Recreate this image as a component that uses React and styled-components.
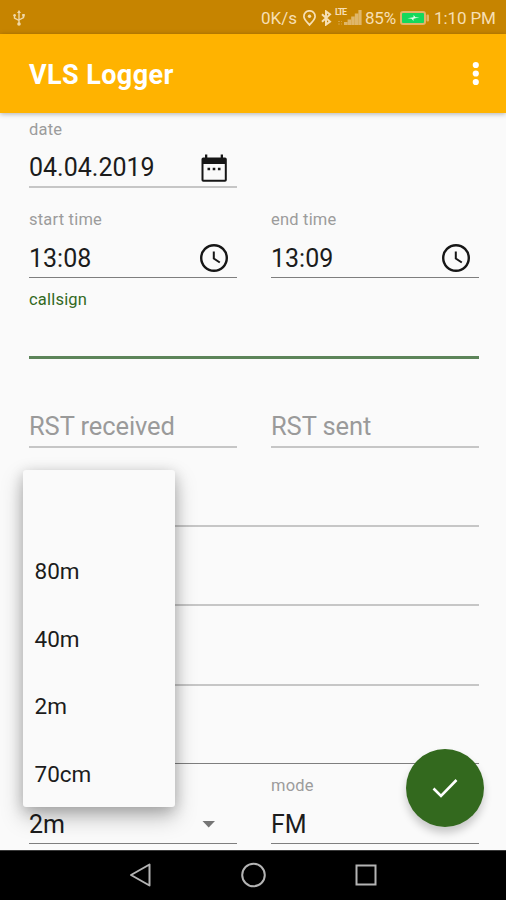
import React from 'react'

import styled, { createGlobalStyle } from 'styled-components';


const GlobalStyle = createGlobalStyle`
  * {
    box-sizing: border-box;
  }
  body {
    margin: 0;
    background-color: #fafafa;
    font-family: Roboto, 'Liberation Sans', sans-serif;
  }
`;

const Screen = styled.div`
  position: relative;
  display: flex;
  flex-direction: column;
  width: 506px;
  height: 900px;
  overflow: hidden;
  background-color: #fafafa;
`;

const StatusBar = styled.div`
  display: flex;
  justify-content: space-between;
  align-items: center;
  height: 34px;
  flex: none;
  padding: 1px 11px 0 12px;
  background-color: #c68400;
  color: #f6dfb4;
`;

const StatusIcons = styled.div`
  display: flex;
  align-items: center;
  height: 32px;
  white-space: nowrap;

  svg {
    display: block;
    flex: none;
  }
`;

const StatusText = styled.span`
  width: ${({ $width }) => $width}px;
  font-size: 17px;
  letter-spacing: ${({ $spacing }) => $spacing || 0}px;
`;

const IconGroup = styled.div`
  display: flex;
  align-items: center;
  gap: 5px;
  margin: 0 3px 0 6px;
`;

const Network = styled.div`
  display: flex;
  align-items: center;
  position: relative;
  margin-right: 3px;
`;

const Lte = styled.span`
  position: absolute;
  left: 0;
  top: -1px;
  font-size: 9px;
  line-height: 8px;
  font-weight: 700;
  letter-spacing: -1.2px;
`;

const BatteryBox = styled.div`
  margin: 0 4px 0 3px;
`;

const AppBar = styled.header`
  display: flex;
  justify-content: space-between;
  align-items: center;
  height: 79px;
  flex: none;
  padding: 1px 24px 0 29px;
  background-color: #ffb300;
  color: white;
  box-shadow: 0 1px 5px rgba(0, 0, 0, 0.3);
  z-index: 1;
`;

const Title = styled.h1`
  margin: 0;
  font-size: 27px;
  font-weight: 700;
  letter-spacing: 0.4px;
  padding-top: 1px;
`;

const Form = styled.main`
  flex: 1;
  min-height: 0;
  padding: 0 27px 0 29px;
  overflow: hidden;
`;

const Row = styled.div`
  display: grid;
  grid-template-columns: ${({ $single }) => ($single ? '1fr' : '208px 208px')};
  column-gap: 34px;
  height: ${({ $height }) => $height}px;
`;

const lines = {
    light: '2px solid #c6c6c6',
    dark: '1px solid #7e7e7e',
    focus: '3px solid #5c8459',
}

const Field = styled.div`
  display: flex;
  flex-direction: column;
  justify-content: flex-end;
  height: 100%;
  border-bottom: ${({ $line }) => lines[$line]};
`;

const Label = styled.label`
  margin-bottom: 9px;
  color: ${({ $focus }) => ($focus ? '#33691e' : '#9c9c9c')};
  font-size: 16.5px;
  line-height: 20px;
  letter-spacing: 0.2px;
`;

const Value = styled.div`
  display: flex;
  justify-content: space-between;
  align-items: center;
  height: ${({ $height }) => $height || 38}px;
  padding-right: ${({ $end }) => $end || 8}px;
  color: ${({ $hint }) => ($hint ? '#9a9a9a' : '#1c1c1c')};
  font-size: ${({ $hint }) => ($hint ? 25.5 : 25)}px;
  letter-spacing: ${({ $hint }) => ($hint ? -0.1 : 0)}px;

  svg {
    display: block;
  }
`;

const Menu = styled.ul`
  position: absolute;
  left: 23px;
  top: 470px;
  width: 152px;
  height: 337px;
  margin: 0;
  padding: 0;
  list-style: none;
  background-color: #fafafa;
  border-radius: 3px;
  box-shadow: 0 10px 22px rgba(0, 0, 0, 0.26), 0 3px 14px rgba(0, 0, 0, 0.18);
  z-index: 2;
`;

const MenuItem = styled.li`
  display: flex;
  align-items: center;
  height: 67.5px;
  padding-left: 11.5px;
  color: #1c1c1c;
  font-size: 22.5px;
`;

const Fab = styled.button`
  position: absolute;
  left: 406px;
  top: 749px;
  display: flex;
  justify-content: center;
  align-items: center;
  width: 78px;
  height: 78px;
  padding: 0;
  border: none;
  border-radius: 50%;
  background-color: #33691e;
  box-shadow: 0 6px 9px rgba(0, 0, 0, 0.2);
  z-index: 2;
`;

const NavBar = styled.nav`
  display: flex;
  justify-content: center;
  align-items: center;
  gap: 88px;
  height: 50px;
  flex: none;
  padding-bottom: 1px;
  background-color: black;
  border-top: 1px solid #3a3a3a;
`;

const UsbIcon = () => (
    <svg width="14" height="18" viewBox="0 0 14 18" fill="none" stroke="#f0d8a8" strokeWidth="1.4">
        <path d="M7 3v11M2.500 6v3L7 11.500M11.500 6v2.500L7 11" />
        <path d="M7 1l2 3H5z" fill="#f0d8a8" stroke="none" />
        <circle cx="2.600" cy="6.200" r="1.300" fill="#f0d8a8" stroke="none" />
        <path d="M10.200 5h2.600v2.600h-2.600z" fill="#f0d8a8" stroke="none" />
        <circle cx="7" cy="15" r="1.800" fill="#f0d8a8" stroke="none" />
    </svg>
)

const PinIcon = () => (
    <svg width="13" height="16" viewBox="0 0 13 16" fill="none" stroke="#f6dfb4" strokeWidth="1.700">
        <path d="M6.500 15C4 12 .9 9.300.9 6.400a5.600 5.600 0 0 1 11.200 0C12.100 9.300 9 12 6.500 15z" />
        <circle cx="6.500" cy="6.300" r="1.700" fill="#f6dfb4" stroke="none" />
    </svg>
)

const BluetoothIcon = () => (
    <svg width="11" height="16" viewBox="0 0 11 16" fill="none" stroke="#f6dfb4" strokeWidth="2">
        <path d="M1 4.300l8 7.300-4 3V1.400l4 3-8 7.300" />
    </svg>
)

const SignalIcon = () => (
    <svg width="27" height="17" viewBox="0 0 27 17" fill="#dfb66a">
        <path d="M9 13h3.400v3H9zM12.600 10.500H16V16h-3.400zM16.200 7.500h3.400V16h-3.400zM19.800 4.500h3.400V16h-3.400zM23.400 1h3.200v15h-3.200z" />
        <path d="M3 12h2v1H3zM6 12h1v1H6zM3 14.500h2v1H3zM6 14.500h1v1H6z" opacity="0.6" />
    </svg>
)

const BatteryIcon = () => (
    <svg width="30" height="14" viewBox="0 0 30 14">
        <rect x="1" y="1" width="24" height="12" rx="2" fill="#14d95c" stroke="#e3b469" strokeWidth="2" />
        <rect x="26.500" y="3.500" width="2.500" height="7" rx="1" fill="#e3b469" />
        <path d="M7.500 7.300l6-1V4l2 2.300h4l-6 1.500V10l-2-2.200z" fill="#e6ffe9" />
    </svg>
)

const MoreIcon = () => (
    <svg width="12" height="26" viewBox="0 0 12 26" fill="white">
        <circle cx="5.800" cy="4" r="3.100" />
        <circle cx="5.800" cy="12.500" r="3.100" />
        <circle cx="5.800" cy="21" r="3.100" />
    </svg>
)

const CalendarIcon = () => (
    <svg width="30" height="30" viewBox="0 0 30 30" fill="#161616">
        <path d="M6 1.500h2.300v3h13.400v-3H24v3h2q1.800 0 1.800 1.800V27q0 1.800-1.800 1.800H4.300Q2.500 28.800 2.500 27V6.300q0-1.800 1.800-1.800H6zM4.500 11v15.800h21.300V11z" />
        <path d="M8.500 14.800h2.600v2.400H8.500zM13.700 14.800h2.600v2.400h-2.600zM18.900 14.800h2.600v2.400h-2.600z" />
    </svg>
)

const ClockIcon = () => (
    <svg width="30" height="30" viewBox="0 0 30 30" fill="none" stroke="#161616">
        <circle cx="15" cy="15" r="12.800" strokeWidth="2.400" />
        <path d="M14.800 8.500v7l6 4" strokeWidth="2" />
    </svg>
)

const bands = ['', '80m', '40m', '2m', '70cm']

const App = () => {
    return (
        <>
        <GlobalStyle />
        <Screen>
            <StatusBar>
                <UsbIcon />
                <StatusIcons>
                    <StatusText $width={36}>0K/s</StatusText>
                    <IconGroup>
                        <PinIcon />
                        <BluetoothIcon />
                    </IconGroup>
                    <Network>
                        <Lte>LTE</Lte>
                        <SignalIcon />
                    </Network>
                    <StatusText $width={32} $spacing={-0.2}>85%</StatusText>
                    <BatteryBox>
                        <BatteryIcon />
                    </BatteryBox>
                    <StatusText $width={61} $spacing={-0.1}>1:10 PM</StatusText>
                </StatusIcons>
            </StatusBar>

            <AppBar>
                <Title>VLS Logger</Title>
                <MoreIcon />
            </AppBar>

            <Form>
                <Row $height={75}>
                    <Field $line="light">
                        <Label>date</Label>
                        <Value $height={37}>04.04.2019 <CalendarIcon /></Value>
                    </Field>
                </Row>
                <Row $height={90}>
                    <Field $line="dark">
                        <Label>start time</Label>
                        <Value>13:08 <ClockIcon /></Value>
                    </Field>
                    <Field $line="dark">
                        <Label>end time</Label>
                        <Value>13:09 <ClockIcon /></Value>
                    </Field>
                </Row>
                <Row $single $height={81}>
                    <Field $line="focus">
                        <Label $focus>callsign</Label>
                        <Value $height={37} />
                    </Field>
                </Row>
                <Row $height={89}>
                    <Field $line="light">
                        <Value $hint $height={40}>RST received</Value>
                    </Field>
                    <Field $line="light">
                        <Value $hint $height={40}>RST sent</Value>
                    </Field>
                </Row>
                <Row $single $height={79}>
                    <Field $line="light" />
                </Row>
                <Row $single $height={79}>
                    <Field $line="light" />
                </Row>
                <Row $single $height={80}>
                    <Field $line="light" />
                </Row>
                <Row $single $height={78}>
                    <Field $line="dark" />
                </Row>
                <Row $height={80}>
                    <Field $line="dark">
                        <Value $end={21}>
                            2m
                            <svg width="14" height="7" viewBox="0 0 14 7" fill="#757575">
                                <path d="M.5 0H13L6.700 6.500z" />
                            </svg>
                        </Value>
                    </Field>
                    <Field $line="dark">
                        <Label>mode</Label>
                        <Value>FM</Value>
                    </Field>
                </Row>
            </Form>

            <Menu>
                {bands.map((band) => (
                    <MenuItem key={band}>{band}</MenuItem>
                ))}
            </Menu>

            <Fab aria-label="save">
                <svg width="30" height="24" viewBox="0 0 30 24" fill="none" stroke="white" strokeWidth="2.600">
                    <path d="M3.500 12.500l7.500 7.500L26.500 4" />
                </svg>
            </Fab>

            <NavBar>
                <svg width="24" height="26" viewBox="0 0 24 26" fill="none" stroke="#b4b4b4" strokeWidth="2" strokeLinejoin="round">
                    <path d="M3 13L21.500 2.500v21z" />
                </svg>
                <svg width="26" height="26" viewBox="0 0 26 26" fill="none" stroke="#b4b4b4" strokeWidth="2">
                    <circle cx="13.500" cy="13" r="11.300" />
                </svg>
                <svg width="24" height="24" viewBox="0 0 24 24" fill="none" stroke="#b4b4b4" strokeWidth="2">
                    <rect x="2.500" y="2.500" width="19" height="19" />
                </svg>
            </NavBar>
        </Screen>
        </>
    )
}

export default App
